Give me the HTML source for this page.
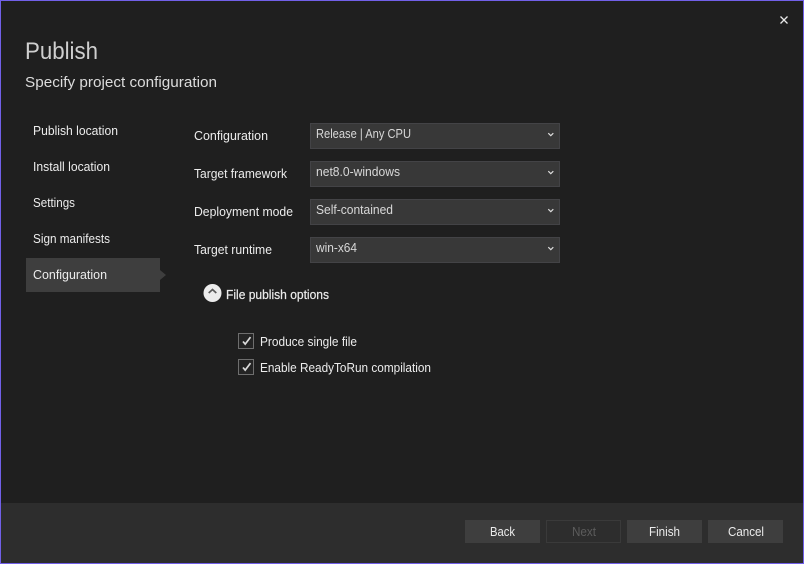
<!DOCTYPE html>
<html><head><meta charset="utf-8"><style>
html,body{margin:0;padding:0;background:#1f1f1f;width:804px;height:564px;overflow:hidden}
svg{display:block}
text{font-family:"Liberation Sans",sans-serif;font-size:12.5px;fill:#ececec}
.v{fill:#d8d8d8}
</style></head><body>
<svg width="804" height="564" viewBox="0 0 804 564" xmlns="http://www.w3.org/2000/svg">
<rect width="804" height="564" fill="#1f1f1f"/>
<rect x="1" y="503" width="802" height="60" fill="#2d2d2d"/>
<rect x="0.5" y="0.5" width="803" height="563" fill="none" stroke="#7160e8"/>
<path d="M780.5 16.5l7 7M787.5 16.5l-7 7" stroke="#e8e8e8" stroke-width="1.3" fill="none"/>

<text x="25" y="59" textLength="73" lengthAdjust="spacingAndGlyphs" style="font-size:24px;fill:#cfcfcf">Publish</text>
<text x="25" y="87" textLength="192" lengthAdjust="spacingAndGlyphs" style="font-size:15px;fill:#dcdcdc">Specify project configuration</text>

<path d="M26 258H160V270L166 275L160 280V292H26Z" fill="#3e3e3e"/>
<text x="33" y="135" textLength="85" lengthAdjust="spacingAndGlyphs">Publish location</text>
<text x="33" y="171" textLength="77" lengthAdjust="spacingAndGlyphs">Install location</text>
<text x="33" y="207" textLength="42" lengthAdjust="spacingAndGlyphs">Settings</text>
<text x="33" y="243" textLength="77" lengthAdjust="spacingAndGlyphs">Sign manifests</text>
<text x="33" y="279" textLength="74" lengthAdjust="spacingAndGlyphs">Configuration</text>

<text x="194" y="140" textLength="74" lengthAdjust="spacingAndGlyphs">Configuration</text>
<text x="194" y="178" textLength="93" lengthAdjust="spacingAndGlyphs">Target framework</text>
<text x="194" y="216" textLength="99" lengthAdjust="spacingAndGlyphs">Deployment mode</text>
<text x="194" y="254" textLength="78" lengthAdjust="spacingAndGlyphs">Target runtime</text>

<g fill="#383838" stroke="#434346">
<rect x="310.5" y="123.5" width="249" height="25"/>
<rect x="310.5" y="161.5" width="249" height="25"/>
<rect x="310.5" y="199.5" width="249" height="25"/>
<rect x="310.5" y="237.5" width="249" height="25"/>
</g>
<text class="v" x="316" y="138" textLength="95" lengthAdjust="spacingAndGlyphs">Release | Any CPU</text>
<text class="v" x="316" y="176" textLength="84" lengthAdjust="spacingAndGlyphs">net8.0-windows</text>
<text class="v" x="316" y="214" textLength="77" lengthAdjust="spacingAndGlyphs">Self-contained</text>
<text class="v" x="316" y="252" textLength="41" lengthAdjust="spacingAndGlyphs">win-x64</text>
<g fill="none" stroke="#dedede" stroke-width="1.2">
<path d="M548.3 133.2l2.5 2.5 2.5-2.5"/>
<path d="M548.3 171.2l2.5 2.5 2.5-2.5"/>
<path d="M548.3 209.2l2.5 2.5 2.5-2.5"/>
<path d="M548.3 247.2l2.5 2.5 2.5-2.5"/>
</g>

<circle cx="212.5" cy="293" r="9" fill="#ececec"/>
<path d="M208.7 293l3.8-3.5 3.8 3.5" fill="none" stroke="#5a5a5a" stroke-width="1.7"/>
<text x="226" y="299" textLength="103" lengthAdjust="spacingAndGlyphs" style="stroke:#ececec;stroke-width:.2">File publish options</text>

<rect x="238.5" y="333.5" width="15" height="15" fill="#242424" stroke="#6e6e6e"/>
<rect x="238.5" y="359.5" width="15" height="15" fill="#242424" stroke="#6e6e6e"/>
<g fill="none" stroke="#dcdcdc" stroke-width="1.7">
<path d="M243 341.5l2.2 2.6 5.3-7"/>
<path d="M243 367.5l2.2 2.6 5.3-7"/>
</g>
<text x="260" y="346" textLength="97" lengthAdjust="spacingAndGlyphs">Produce single file</text>
<text x="260" y="372" textLength="171" lengthAdjust="spacingAndGlyphs">Enable ReadyToRun compilation</text>

<rect x="465" y="520" width="75" height="23" fill="#3e3e3e"/>
<rect x="546.5" y="520.5" width="74" height="22" fill="none" stroke="#3a3a3a"/>
<rect x="627" y="520" width="75" height="23" fill="#3e3e3e"/>
<rect x="708" y="520" width="75" height="23" fill="#3e3e3e"/>
<text x="490" y="536" textLength="25" lengthAdjust="spacingAndGlyphs">Back</text>
<text x="572" y="536" textLength="24" lengthAdjust="spacingAndGlyphs" style="fill:#5c5c5c">Next</text>
<text x="649" y="536" textLength="31" lengthAdjust="spacingAndGlyphs">Finish</text>
<text x="728" y="536" textLength="36" lengthAdjust="spacingAndGlyphs">Cancel</text>
</svg>
</body></html>
